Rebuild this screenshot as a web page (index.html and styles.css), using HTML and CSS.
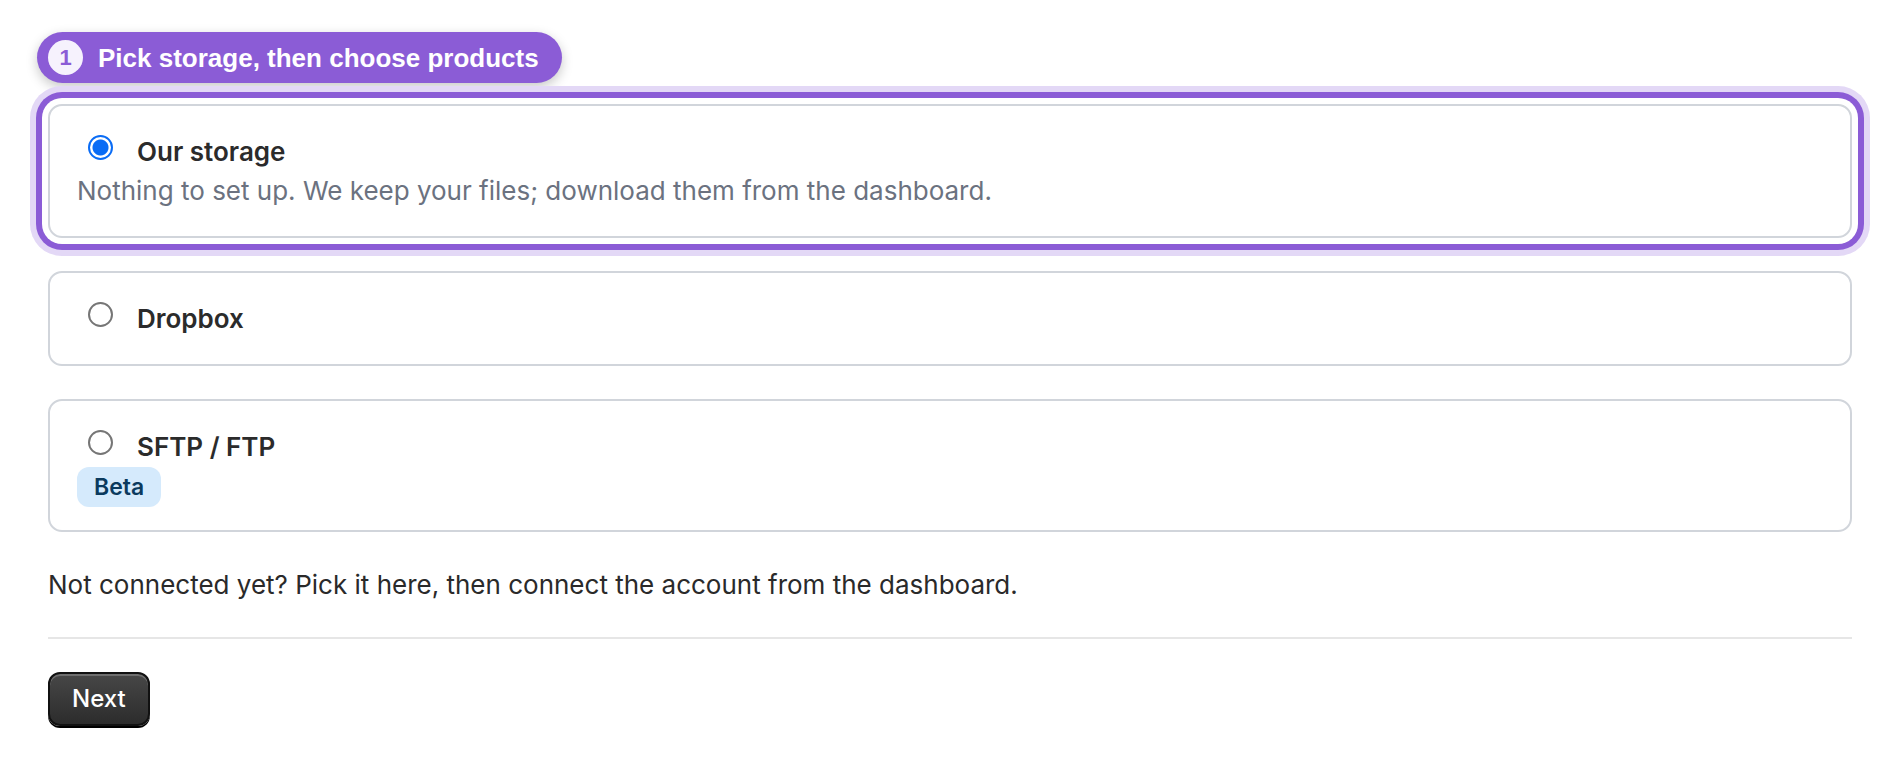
FILE: index.html
```html
<!DOCTYPE html>
<html lang="en">
<head>
  <meta charset="UTF-8" />
  <meta name="viewport" content="width=device-width, initial-scale=1.0"/>
  <title>Storage setup</title>
  <link rel="stylesheet" href="styles.css">
</head>
<body>

  <div class="tour-label">
    <span class="step-num">1</span>
    <span>Pick storage, then choose products</span>
  </div>

  <form class="storage-form">
    <div class="options">
      <label class="option is-active">
        <span class="option-head">
          <input type="radio" name="storage" value="ours" checked>
          <span class="option-title">Our storage</span>
        </span>
        <span class="option-desc">Nothing to set up. We keep your files; download them from the dashboard.</span>
      </label>

      <label class="option">
        <span class="option-head">
          <input type="radio" name="storage" value="dropbox">
          <span class="option-title">Dropbox</span>
        </span>
      </label>

      <label class="option">
        <span class="option-head">
          <input type="radio" name="storage" value="sftp">
          <span class="option-title">SFTP / FTP</span>
        </span>
        <span class="option-tags">
          <span class="tag">Beta</span>
        </span>
      </label>
    </div>

    <p class="hint">Not connected yet? Pick it here, then connect the account from the dashboard.</p>

    <hr class="divider">

    <button type="button" class="btn-next">Next</button>
  </form>

</body>
</html>
```

FILE: styles.css
```css
* {
  box-sizing: border-box;
}

html, body {
  margin: 0;
  background: #fff;
  color: #2a2a2a;
  font-family: 'Inter', sans-serif;
  font-size: 26px;
  line-height: 39px;
}

body {
  padding: 32px 48px;
}

.tour-label {
  display: inline-flex;
  align-items: center;
  gap: 15px;
  height: 51px;
  margin-left: -11px;
  padding: 0 23px 0 11px;
  border-radius: 26px;
  background: #8b5cd6;
  color: #fff;
  font-family: 'Liberation Sans', Arial, sans-serif;
  font-weight: 700;
  font-size: 26px;
  line-height: 30px;
  box-shadow: 0 4px 12px rgba(0, 0, 0, 0.22);
}

.step-num {
  display: flex;
  align-items: center;
  justify-content: center;
  width: 35px;
  height: 35px;
  border-radius: 50%;
  background: #f6f2fd;
  color: #8b5cd6;
  font-size: 22px;
}

.options {
  display: flex;
  flex-direction: column;
  gap: 33px;
  margin-top: 21px;
}

.option {
  display: flex;
  flex-direction: column;
  padding: 26px 26px 26px 27px;
  border: 2px solid #d1d5db;
  border-radius: 14px;
  background: #fff;
  cursor: pointer;
}

.option.is-active {
  box-shadow: 0 0 0 6px #fff, 0 0 0 12px #8b5cd6, 0 0 0 18px #e3d8f6;
}

.option-head {
  display: flex;
  align-items: flex-start;
  gap: 24px;
}

.option-head input {
  appearance: none;
  width: 25px;
  height: 25px;
  margin: 3px 0 0 11px;
  flex: 0 0 auto;
  border: 2px solid #767676;
  border-radius: 50%;
  background: #fff;
}

.option-head input:checked {
  border-color: #0a6cf5;
  background: radial-gradient(circle, #0a6cf5 0 7.5px, #fff 8.5px);
}

.option-title {
  font-weight: 600;
  color: #2b2b2b;
}

.option-desc {
  color: #6b7280;
}

.option-tags {
  display: flex;
}

.tag {
  height: 40px;
  margin: 1px 0 -3px;
  padding: 0 17px;
  border-radius: 12px;
  background: #d5eafc;
  color: #0b3a5e;
  font-size: 23px;
  font-weight: 600;
  line-height: 40px;
}

.hint {
  margin: 33px 0 0;
}

.divider {
  height: 2px;
  margin: 33px 0 33px;
  border: 0;
  background: #e6e6e6;
}

.btn-next {
  padding: 7px 22px;
  border: 2px solid #111;
  border-radius: 12px;
  background: linear-gradient(#474747, #2c2c2c);
  color: #fff;
  font-family: 'Inter', sans-serif;
  font-size: 24px;
  font-weight: 500;
  line-height: 36px;
  box-shadow: inset 0 2px 0 rgba(255, 255, 255, 0.22), 0 2px 0 #000;
  cursor: pointer;
}
```
